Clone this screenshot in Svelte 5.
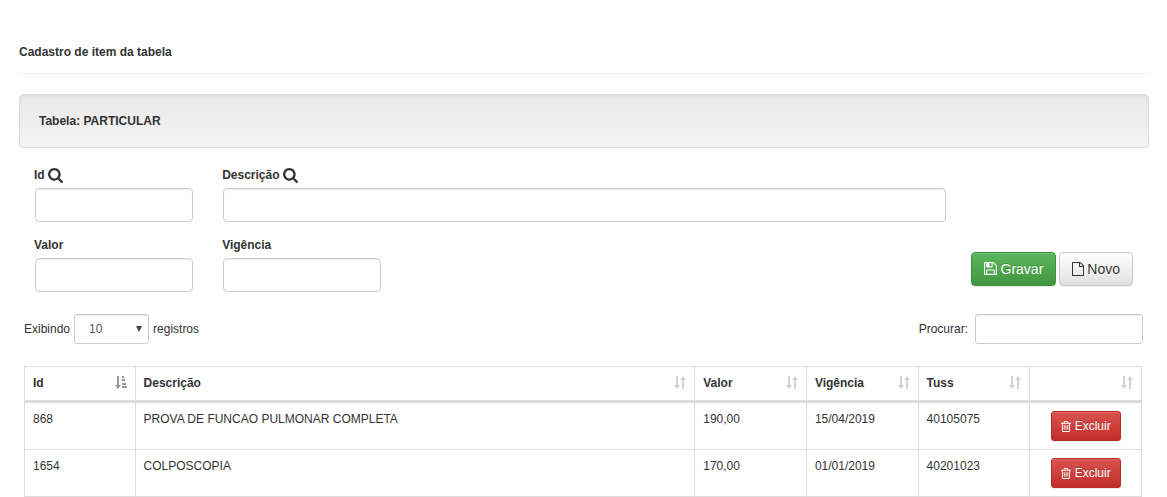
<script>
  const columns = [
    { label: 'Id', sort: 'asc' },
    { label: 'Descrição', wide: true },
    { label: 'Valor' },
    { label: 'Vigência' },
    { label: 'Tuss' },
    { label: '' }
  ];
  let rows = $state([
    { id: 868, descricao: 'PROVA DE FUNCAO PULMONAR COMPLETA', valor: '190,00', vigencia: '15/04/2019', tuss: '40105075' },
    { id: 1654, descricao: 'COLPOSCOPIA', valor: '170,00', vigencia: '01/01/2019', tuss: '40201023' }
  ]);
  const remove = (id) => (rows = rows.filter((r) => r.id !== id));
</script>

{#snippet search()}
  <svg class="search" viewBox="64 128 1664 1664" aria-hidden="true"><path d="M1216 832q0-185-131.500-316.500t-316.500-131.500-316.500 131.500-131.500 316.500 131.500 316.500 316.500 131.500 316.500-131.500 131.500-316.500zm512 832q0 52-38 90t-90 38q-54 0-90-38l-343-342q-179 124-399 124-143 0-273.500-55.500t-225-150-150-225-55.500-273.500 55.500-273.500 150-225 225-150 273.500-55.500 273.500 55.500 225 150 150 225 55.500 273.500q0 220-124 399l343 343q37 37 37 90z" /></svg>
{/snippet}

<main>
  <h1>Cadastro de item da tabela</h1>
  <div class="well">Tabela: PARTICULAR</div>

  <form onsubmit={(e) => e.preventDefault()}>
    <div class="line">
      <div class="field small">
        <label for="id">Id {@render search()}</label>
        <input id="id" type="text" />
      </div>
      <div class="field large">
        <label for="descricao">Descrição {@render search()}</label>
        <input id="descricao" type="text" />
      </div>
    </div>
    <div class="line">
      <div class="field small">
        <label for="valor">Valor</label>
        <input id="valor" type="text" />
      </div>
      <div class="field small">
        <label for="vigencia">Vigência</label>
        <input id="vigencia" type="text" />
      </div>
      <div class="actions">
        <button class="btn save" type="submit">
          <svg viewBox="128 128 1536 1664" aria-hidden="true"><path d="M512 1536h768v-384h-768v384zm896 0h128v-896q0-14-10-38.500t-20-34.500l-281-281q-10-10-34-20t-39-10v416q0 40-28 68t-68 28h-576q-40 0-68-28t-28-68v-416h-128v1280h128v-416q0-40 28-68t68-28h832q40 0 68 28t28 68v416zm-384-928v-320q0-13-9.500-22.500t-22.500-9.500h-192q-13 0-22.500 9.500t-9.500 22.500v320q0 13 9.500 22.500t22.500 9.500h192q13 0 22.500-9.500t9.500-22.500zm640 32v928q0 40-28 68t-68 28h-1344q-40 0-68-28t-28-68v-1344q0-40 28-68t68-28h928q40 0 88 20t76 48l280 280q28 28 48 76t20 88z" /></svg>
          Gravar
        </button>
        <button class="btn new" type="reset">
          <svg viewBox="128 0 1536 1792" aria-hidden="true"><path d="M1596 380q28 28 48 76t20 88v1152q0 40-28 68t-68 28h-1344q-40 0-68-28t-28-68v-1600q0-40 28-68t68-28h896q40 0 88 20t76 48zm-444-244v376h376q-10-29-22-41l-313-313q-12-12-41-22zm384 1528v-1024h-416q-40 0-68-28t-28-68v-416h-768v1536h1280z" /></svg>
          Novo
        </button>
      </div>
    </div>
  </form>

  <section class="list">
    <div class="tools">
      <label class="length">
        Exibindo
        <span class="select">
          <select>
            <option>10</option>
            <option>25</option>
            <option>50</option>
            <option>100</option>
          </select>
        </span>
        registros
      </label>
      <label class="filter">Procurar: <input type="search" /></label>
    </div>

    <table>
      <thead>
        <tr>
          {#each columns as col}
            <th class:wide={col.wide} aria-sort={col.sort ? 'ascending' : 'none'}>
              <button class="sort" type="button" aria-label={col.label || 'Ordenar'}>
                <span>{col.label}</span>
                {#if col.sort}
                  <svg class="active" viewBox="0 0 12 13" aria-hidden="true"><path d="M2 0h2v9h2L3 13 0 9h2zM7 0h2v2H7zM7 3h3v2H7zM7 7h4v2H7zM7 10h5v2H7z" /></svg>
                {:else}
                  <svg viewBox="0 0 12 13" aria-hidden="true"><path d="M2 0h2v9h2L3 13 0 9h2zM8 13h2V4h2L9 0 6 4h2z" /></svg>
                {/if}
              </button>
            </th>
          {/each}
        </tr>
      </thead>
      <tbody>
        {#each rows as row (row.id)}
          <tr>
            <td>{row.id}</td>
            <td>{row.descricao}</td>
            <td>{row.valor}</td>
            <td>{row.vigencia}</td>
            <td>{row.tuss}</td>
            <td class="center">
              <button class="btn delete" type="button" onclick={() => remove(row.id)}>
                <svg viewBox="192 128 1408 1536" aria-hidden="true"><path d="M704 736v576q0 14-9 23t-23 9h-64q-14 0-23-9t-9-23v-576q0-14 9-23t23-9h64q14 0 23 9t9 23zm256 0v576q0 14-9 23t-23 9h-64q-14 0-23-9t-9-23v-576q0-14 9-23t23-9h64q14 0 23 9t9 23zm256 0v576q0 14-9 23t-23 9h-64q-14 0-23-9t-9-23v-576q0-14 9-23t23-9h64q14 0 23 9t9 23zm128 724v-948h-896v948q0 22 7 40.500t14.500 27 10.500 8.500h832q3 0 10.500-8.500t14.500-27 7-40.500zm-672-1076h448l-48-117q-7-9-17-11h-317q-10 2-17 11zm928 32v64q0 14-9 23t-23 9h-96v948q0 83-47 143.500t-113 60.500h-832q-66 0-113-58.500t-47-141.500v-952h-96q-14 0-23-9t-9-23v-64q0-14 9-23t23-9h309l70-167q15-37 54-63t79-26h320q40 0 79 26t54 63l70 167h309q14 0 23 9t9 23z" /></svg>
                Excluir
              </button>
            </td>
          </tr>
        {/each}
      </tbody>
    </table>
  </section>
</main>

<style>
  :global(body) {
    background: #fff;
  }
  main, main * {
    box-sizing: border-box;
  }
  main {
    padding: 42px 18px 0 19px;
    font: 12px/20px "Liberation Sans", Arial, sans-serif;
    color: #333;
  }
  svg {
    fill: currentColor;
    flex: none;
  }
  h1 {
    margin: 0 0 20px;
    padding-bottom: 11px;
    border-bottom: 1px solid #eee;
    font-size: 12px;
    font-weight: bold;
    line-height: 20px;
  }
  .well {
    padding: 16px 19px;
    border: 1px solid #dcdcdc;
    border-radius: 4px;
    background: linear-gradient(#e8e8e8, #f5f5f5);
    box-shadow: inset 0 1px 3px rgba(0, 0, 0, 0.05), 0 1px 0 rgba(255, 255, 255, 0.1);
    font-weight: bold;
  }
  form {
    padding: 17px 0 0 1px;
  }
  .line {
    display: flex;
    margin-bottom: 13px;
  }
  .field {
    padding: 0 15px;
  }
  .small {
    width: 16.6667%;
  }
  .large {
    width: 66.6667%;
  }
  .field label {
    display: flex;
    align-items: center;
    gap: 3px;
    height: 20px;
    margin: 0 0 3px -1px;
    font-weight: bold;
  }
  .search {
    width: 15px;
    height: 15px;
  }
  input, select {
    border: 1px solid #ccc;
    border-radius: 4px;
    background: #fff;
    box-shadow: inset 0 1px 1px rgba(0, 0, 0, 0.075);
    font: inherit;
    color: #555;
    appearance: none;
  }
  .field input {
    display: block;
    width: 100%;
    height: 34px;
    padding: 6px 12px;
  }
  .actions {
    display: flex;
    align-items: flex-start;
    gap: 3px;
    margin: 17px 16px 0 auto;
  }
  .btn {
    display: inline-flex;
    align-items: center;
    justify-content: center;
    gap: 4px;
    height: 34px;
    padding: 0 12px;
    border: 1px solid;
    border-radius: 4px;
    font: 14px/20px "Liberation Sans", Arial, sans-serif;
    box-shadow: inset 0 1px 0 rgba(255, 255, 255, 0.15), 0 1px 1px rgba(0, 0, 0, 0.075);
  }
  .btn svg {
    width: 12px;
    height: 14px;
  }
  .save {
    border-color: #3e8f3e;
    background: linear-gradient(#5cb85c, #419641);
    color: #fff;
    text-shadow: 0 -1px 0 rgba(0, 0, 0, 0.2);
  }
  .save svg {
    width: 13px;
  }
  .new {
    border-color: #ccc;
    background: linear-gradient(#fff, #e0e0e0);
    color: #333;
    text-shadow: 0 1px 0 #fff;
  }
  .new svg {
    width: 12px;
    margin-right: -1px;
  }
  .delete {
    height: 30px;
    padding: 0 9px;
    border-color: #b92c28;
    border-radius: 3px;
    background: linear-gradient(#d9534f, #c12e2a);
    color: #fff;
    font-size: 12px;
    text-shadow: 0 -1px 0 rgba(0, 0, 0, 0.2);
  }
  .delete svg {
    width: 10px;
    height: 11px;
  }
  .list {
    padding: 9px 7px 0 5px;
  }
  .tools {
    display: flex;
    justify-content: space-between;
    margin-bottom: 22px;
  }
  .tools label {
    display: flex;
    align-items: center;
    gap: 4px;
    line-height: 18px;
  }
  .tools .filter {
    gap: 7px;
    margin-right: -1px;
  }
  .select {
    position: relative;
  }
  .select::after {
    content: "";
    position: absolute;
    top: 12px;
    right: 7px;
    border: 3px solid transparent;
    border-top: 6px solid #444;
    border-bottom: 0;
    pointer-events: none;
  }
  select, .filter input {
    display: block;
    width: 75px;
    height: 30px;
    padding: 0 14px;
    border-radius: 3px;
  }
  .filter input {
    width: 168px;
    padding: 5px 10px;
  }
  table {
    width: 100%;
    table-layout: fixed;
    border-collapse: collapse;
  }
  th, td {
    border: 1px solid #ddd;
    padding: 7px 8px;
    text-align: left;
    vertical-align: top;
    line-height: 18px;
  }
  th {
    width: 10%;
    padding: 6px 8px 8px;
    border-bottom: 3px solid #ddd;
  }
  th:first-child {
    width: 9.9%;
  }
  .wide {
    width: 50.1%;
  }
  td.center {
    padding: 8px;
    text-align: center;
  }
  .center .btn {
    display: flex;
    margin: 0 auto;
  }
  .sort {
    display: flex;
    align-items: center;
    justify-content: space-between;
    width: 100%;
    height: 19px;
    padding: 0;
    border: 0;
    background: none;
    color: inherit;
    font: bold 12px/18px "Liberation Sans", Arial, sans-serif;
  }
  .sort svg {
    width: 12px;
    height: 13px;
    color: #d3d3d3;
  }
  .sort .active {
    color: #999;
  }
</style>
